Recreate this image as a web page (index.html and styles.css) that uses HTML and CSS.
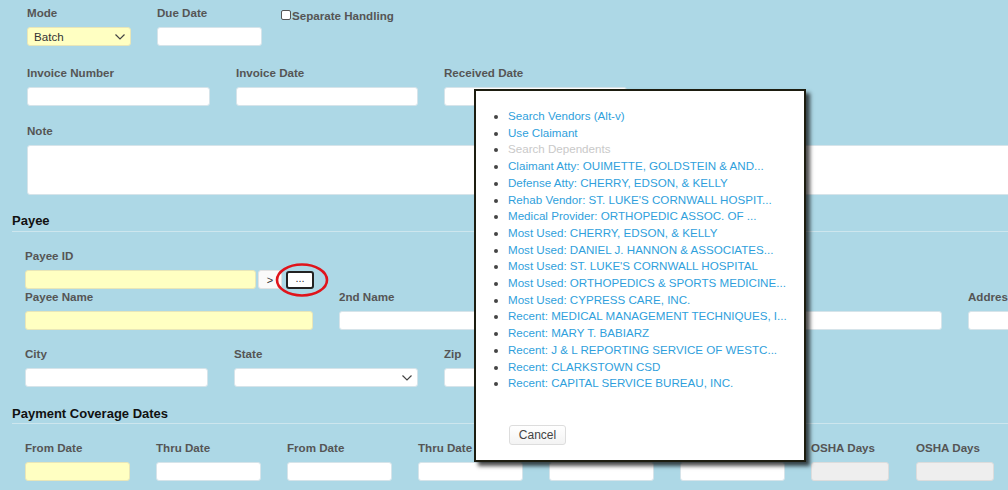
FILE: index.html
```html
<!DOCTYPE html>
<html>
<head>
<meta charset="utf-8">
<link rel="stylesheet" href="styles.css">
</head>
<body>
<div class="page">
  <div class="top">
    <div class="row row1">
      <div class="field w104">
        <label>Mode</label>
        <div class="select yellow"><span>Batch</span><svg class="chev" width="10" height="6" viewBox="0 0 10 6"><path d="M0.5 0.5 L5 5 L9.5 0.5" fill="none" stroke="#444" stroke-width="1.2"/></svg></div>
      </div>
      <div class="field w105">
        <label>Due Date</label>
        <div class="input"></div>
      </div>
      <div class="check"><span class="box"></span><span>Separate Handling</span></div>
    </div>
    <div class="row row2">
      <div class="field w183"><label>Invoice Number</label><div class="input"></div></div>
      <div class="field w182"><label>Invoice Date</label><div class="input"></div></div>
      <div class="field w183"><label>Received Date</label><div class="input"></div></div>
    </div>
    <div class="row row3">
      <div class="field wnote"><label>Note</label><div class="input textarea"></div></div>
    </div>
  </div>

  <div class="section">
    <h3 class="sec-head">Payee</h3>
    <div class="sec-body">
      <div class="row prow1">
        <div class="field">
          <label>Payee ID</label>
          <div class="idline">
            <div class="input yellow w231"></div>
            <div class="btn go">&gt;</div>
            <div class="btn dots">...</div>
          </div>
        </div>
      </div>
      <div class="row prow2">
        <div class="field w288"><label>Payee Name</label><div class="input yellow"></div></div>
        <div class="field w603"><label>2nd Name</label><div class="input"></div></div>
        <div class="field w250"><label>Address</label><div class="input"></div></div>
      </div>
      <div class="row prow3">
        <div class="field w183"><label>City</label><div class="input"></div></div>
        <div class="field w184"><label>State</label><div class="select"><span></span><svg class="chev" width="10" height="6" viewBox="0 0 10 6"><path d="M0.5 0.5 L5 5 L9.5 0.5" fill="none" stroke="#444" stroke-width="1.2"/></svg></div></div>
        <div class="field w184"><label>Zip</label><div class="input"></div></div>
      </div>
    </div>
  </div>

  <div class="section sec2">
    <h3 class="sec-head">Payment Coverage Dates</h3>
    <div class="sec-body">
      <div class="row drow">
        <div class="field w105"><label>From Date</label><div class="input yellow"></div></div>
        <div class="field w105"><label>Thru Date</label><div class="input"></div></div>
        <div class="field w105"><label>From Date</label><div class="input"></div></div>
        <div class="field w105"><label>Thru Date</label><div class="input"></div></div>
        <div class="field w105"><label>From Date</label><div class="input"></div></div>
        <div class="field w105"><label>Thru Date</label><div class="input"></div></div>
        <div class="field w78"><label>OSHA Days</label><div class="input grey"></div></div>
        <div class="field w78 last"><label>OSHA Days</label><div class="input grey"></div></div>
      </div>
    </div>
  </div>

  <svg class="ring" width="56" height="36" viewBox="0 0 56 36"><ellipse cx="28" cy="18" rx="25" ry="15.5" fill="none" stroke="#e0141b" stroke-width="2.6"/></svg>

  <div class="popup">
    <ul class="menu">
      <li><a>Search Vendors (Alt-v)</a></li>
      <li><a>Use Claimant</a></li>
      <li class="disabled"><a>Search Dependents</a></li>
      <li><a>Claimant Atty: OUIMETTE, GOLDSTEIN &amp; AND...</a></li>
      <li><a>Defense Atty: CHERRY, EDSON, &amp; KELLY</a></li>
      <li><a>Rehab Vendor: ST. LUKE'S CORNWALL HOSPIT...</a></li>
      <li><a>Medical Provider: ORTHOPEDIC ASSOC. OF ...</a></li>
      <li><a>Most Used: CHERRY, EDSON, &amp; KELLY</a></li>
      <li><a>Most Used: DANIEL J. HANNON &amp; ASSOCIATES...</a></li>
      <li><a>Most Used: ST. LUKE'S CORNWALL HOSPITAL</a></li>
      <li><a>Most Used: ORTHOPEDICS &amp; SPORTS MEDICINE...</a></li>
      <li><a>Most Used: CYPRESS CARE, INC.</a></li>
      <li><a>Recent: MEDICAL MANAGEMENT TECHNIQUES, I...</a></li>
      <li><a>Recent: MARY T. BABIARZ</a></li>
      <li><a>Recent: J &amp; L REPORTING SERVICE OF WESTC...</a></li>
      <li><a>Recent: CLARKSTOWN CSD</a></li>
      <li><a>Recent: CAPITAL SERVICE BUREAU, INC.</a></li>
    </ul>
    <div class="cancel">Cancel</div>
  </div>
</div>
</body>
</html>
```

FILE: styles.css
```css
html, body {
  margin: 0;
  padding: 0;
  background: #add8e6;
  overflow: hidden;
  width: 1008px;
  height: 490px;
}
.page {
  position: relative;
  width: 1008px;
  height: 490px;
  font-family: "Liberation Sans", Arial, sans-serif;
  font-size: 11.6px;
  color: #333;
}
.row {
  display: flex;
  flex-wrap: nowrap;
  gap: 26px;
}
.field {
  display: flex;
  flex-direction: column;
  flex: none;
}
.field label {
  display: block;
  height: 14px;
  line-height: 14px;
  margin-bottom: 7px;
  font-weight: bold;
  color: #555;
  white-space: nowrap;
}
.input, .select {
  box-sizing: border-box;
  height: 19px;
  background: #fff;
  border: 1px solid #d6e4ea;
  border-radius: 3px;
}
.yellow { background: #ffffc2; border-color: #e8e6b8; }
.grey { background: #eeeeee; border-color: #dcdcdc; }
.textarea { height: 50px; }
.select {
  display: flex;
  align-items: center;
  justify-content: space-between;
  padding: 0 5px 0 6px;
  color: #333;
}
.select .chev { margin-top: 1px; }

.w104 { width: 104px; }
.w105 { width: 105px; }
.w78 { width: 78px; }
.w182 { width: 182px; }
.w183 { width: 183px; }
.w184 { width: 184px; }
.w231 { width: 231px; }
.w250 { width: 250px; }
.w288 { width: 288px; }
.w603 { width: 603px; }
.wnote { width: 1000px; }

.top { padding-left: 27px; }
.row1 { padding-top: 6px; }
.row2 { margin-top: 20px; }
.row3 { margin-top: 18px; }

.check {
  display: flex;
  align-items: center;
  margin-left: -7px;
  margin-top: 2px;
  height: 14px;
  font-weight: bold;
  color: #555;
  white-space: nowrap;
}
.check .box {
  box-sizing: border-box;
  width: 10px;
  height: 10px;
  border: 1px solid #555;
  border-radius: 2px;
  background: #fff;
  margin-right: 1px;
}

.section { margin-left: 12px; }
.sec-head {
  margin: 18px 0 0 0;
  font-size: 13px;
  line-height: 16px;
  padding-bottom: 2px;
  font-weight: bold;
  color: #111;
  border-bottom: 1px solid #cde6ee;
}
.sec-body { padding-left: 13px; }
.prow1 { margin-top: 17px; }
.prow2 { margin-top: 1px; }
.prow3 { margin-top: 17px; }
.sec2 .sec-head { margin-top: 19px; padding-bottom: 1px; }
.drow { margin-top: 17px; }
.drow .last { margin-left: 1px; }

.idline {
  display: flex;
  align-items: center;
}
.btn {
  box-sizing: border-box;
  display: flex;
  align-items: center;
  justify-content: center;
  font-size: 11px;
  color: #333;
  background: #fafafa;
  border-radius: 3px;
}
.btn.go {
  width: 24px;
  height: 19px;
  margin-left: 2px;
  border: 1px solid #e2e2e2;
}
.btn.dots {
  width: 28px;
  height: 18px;
  margin-left: 4px;
  border: 2px solid #222;
  background: #fff;
  line-height: 10px;
  padding-bottom: 3px;
}

.ring {
  position: absolute;
  left: 274px;
  top: 262px;
}

.popup {
  position: absolute;
  left: 474px;
  top: 89px;
  box-sizing: border-box;
  width: 332px;
  height: 373px;
  background: #fff;
  border: 2px solid #1d1d10;
  box-shadow: 4px 4px 4px rgba(0,0,0,0.7);
  font-size: 11.6px;
}
.menu {
  margin: 17px 0 0 0;
  padding: 0 0 0 32px;
  list-style: disc;
  color: #444;
}
.menu li {
  line-height: 16.7px;
  white-space: nowrap;
}
.menu li a { color: #2f9fdc; }
.menu li.disabled a { color: #c9c9c9; }
.cancel {
  box-sizing: border-box;
  margin: 33px 0 0 33px;
  width: 57px;
  height: 20px;
  display: flex;
  align-items: center;
  justify-content: center;
  font-size: 12px;
  color: #444;
  background: linear-gradient(#fff, #f3f3f3);
  border: 1px solid #ddd;
  border-radius: 3px;
}
```
